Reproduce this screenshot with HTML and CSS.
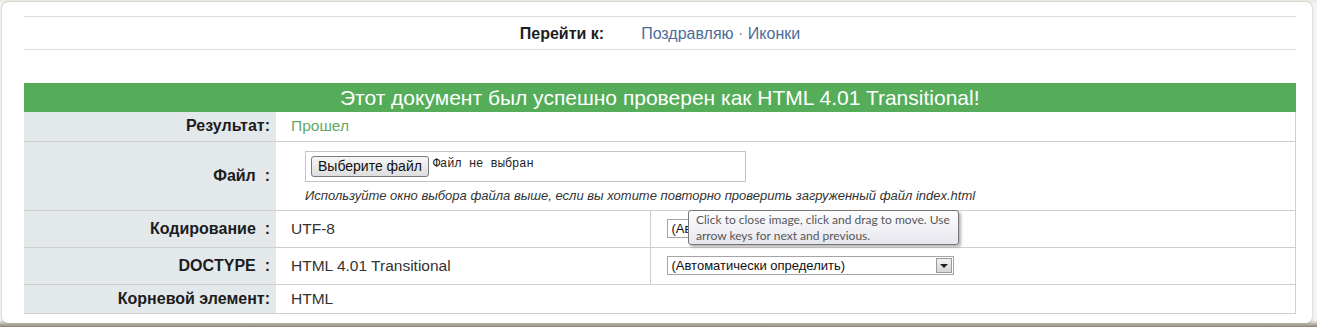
FILE: index.html
```html
<!DOCTYPE html>
<html lang="ru">
<head>
	<meta charset="UTF-8">
	<title>Результат проверки</title>
	<link rel="stylesheet" href="styles.css">
</head>
<body>
	<div class="backdrop">
		<div class="card">
			<div class="jump">
				<span class="jump-label">Перейти к:</span>
				<span class="jump-links"><a href="#">Поздравляю</a> <span class="dot">·</span> <a href="#">Иконки</a></span>
			</div>

			<table class="result">
				<tr>
					<th class="banner" colspan="3">Этот документ был успешно проверен как HTML 4.01 Transitional!</th>
				</tr>
				<tr class="row-short">
					<td class="label">Результат:</td>
					<td class="value passed" colspan="2">Прошел</td>
				</tr>
				<tr class="row-file">
					<td class="label">Файл&nbsp; :</td>
					<td class="value" colspan="2">
						<div class="file-box">
							<span class="file-btn">Выберите файл</span>
							<span class="file-name">Файл не выбран</span>
						</div>
						<p class="hint">Используйте окно выбора файла выше, если вы хотите повторно проверить загруженный файл index.html</p>
					</td>
				</tr>
				<tr class="row-tall">
					<td class="label">Кодирование&nbsp; :</td>
					<td class="value">UTF-8</td>
					<td class="extra">
						<div class="select">
							<span class="select-text">(Автоматически определить)</span>
							<span class="select-arrow"></span>
						</div>
					</td>
				</tr>
				<tr class="row-tall">
					<td class="label">DOCTYPE&nbsp; :</td>
					<td class="value">HTML 4.01 Transitional</td>
					<td class="extra">
						<div class="select">
							<span class="select-text">(Автоматически определить)</span>
							<span class="select-arrow"></span>
						</div>
					</td>
				</tr>
				<tr class="row-short">
					<td class="label">Корневой элемент:</td>
					<td class="value" colspan="2">HTML</td>
				</tr>
			</table>

			<div class="tooltip">Click to close image, click and drag to move. Use<br>arrow keys for next and previous.</div>
		</div>
	</div>
</body>
</html>
```

FILE: styles.css
```css
*{padding: 0;margin: 0;box-sizing: border-box;}
body{
	background-color: #b9b2a4;
	font-family: "Liberation Sans", Arial, sans-serif;
	color: #222;
}
.backdrop{
	width: 1317px;
	height: 327px;
	padding: 2px 5px 0 2px;
	background: linear-gradient(#efece6 0, #efece6 2px, #f4f4f4 3px, #f4f4f4 320px, #8c8272 327px);
}
.card{
	position: relative;
	height: 321px;
	background-color: #fff;
	border-radius: 6px;
	box-shadow: 0 0 2px rgba(0,0,0,0.35);
	padding: 14px 16px 0 22px;
}

.jump{
	display: flex;
	justify-content: center;
	align-items: center;
	gap: 37px;
	height: 34px;
	border-top: 1px solid #dcdcdc;
	border-bottom: 1px solid #dcdcdc;
	font-size: 16px;
	padding-top: 1px;
}
.jump-label{
	font-weight: bold;
	color: #1e1e1e;
}
.jump-links a{
	color: #4d6b99;
	text-decoration: none;
}
.jump-links .dot{
	color: #888;
}

.result{
	margin-top: 33px;
	width: 1272px;
	border-collapse: collapse;
	font-size: 16px;
}
.result td{
	border-bottom: 1px solid #cfcfcf;
	vertical-align: middle;
}
.result .banner{
	height: 29px;
	background-color: #55ad5a;
	color: #fff;
	font-size: 21px;
	font-weight: normal;
	text-align: center;
	padding-top: 1px;
}
.row-short td{ height: 29px; }
.row-file td{ height: 69px; }
.row-tall td{ height: 37px; }

.label{
	width: 252px;
	background-color: #e3e8eb;
	text-align: right;
	font-weight: bold;
	padding-right: 6px;
	color: #1c1c1c;
}
.value{
	width: 374px;
	padding-left: 15px;
	color: #333;
	font-size: 15.5px;
}
.result td.value,
.result td.extra{
	border-right: 1px solid #cfcfcf;
}
.extra{
	padding-left: 16px;
}
.row-tall .value{
	border-right-color: #e6e6e6;
}
.passed{
	color: #66a866;
}

.file-box{
	display: flex;
	align-items: center;
	width: 441px;
	height: 31px;
	margin-left: 14px;
	margin-top: 2px;
	border: 1px solid #c4c4c4;
	padding-left: 5px;
}
.file-btn{
	display: inline-block;
	height: 21px;
	line-height: 19px;
	padding: 0 6px;
	font-size: 14px;
	color: #111;
	border: 1px solid #7a7a7a;
	border-radius: 3px;
	background: linear-gradient(#f6f6f6, #dedede);
}
.file-name{
	font-family: "Liberation Mono", "Courier New", monospace;
	font-size: 12px;
	color: #222;
	margin-left: 4px;
	margin-top: -4px;
}
.hint{
	margin: 6px 0 0 14px;
	font-size: 13px;
	font-style: italic;
	color: #333;
}

.select{
	display: flex;
	align-items: center;
	justify-content: space-between;
	width: 287px;
	height: 19px;
	border: 1px solid #a5a5a5;
	padding: 0 1px 0 4px;
	font-size: 13px;
	color: #111;
}
.select-arrow{
	position: relative;
	width: 16px;
	height: 15px;
	border: 1px solid #9a9a9a;
	background: linear-gradient(#f2f2f2, #d6d6d6);
}
.select-arrow:after{
	content: "";
	position: absolute;
	left: 3px;
	top: 5px;
	border-left: 4px solid transparent;
	border-right: 4px solid transparent;
	border-top: 4px solid #222;
}

.tooltip{
	position: absolute;
	left: 686px;
	top: 208px;
	width: 271px;
	height: 35px;
	padding: 1px 4px 0 7px;
	font-family: Lato, "Open Sans", sans-serif;
	font-size: 12px;
	line-height: 16px;
	white-space: nowrap;
	color: #575757;
	background: linear-gradient(#ffffff, #e5e6ee);
	border: 1px solid #767676;
	border-radius: 3px;
	box-shadow: 2px 2px 3px rgba(0,0,0,0.3);
}
```
